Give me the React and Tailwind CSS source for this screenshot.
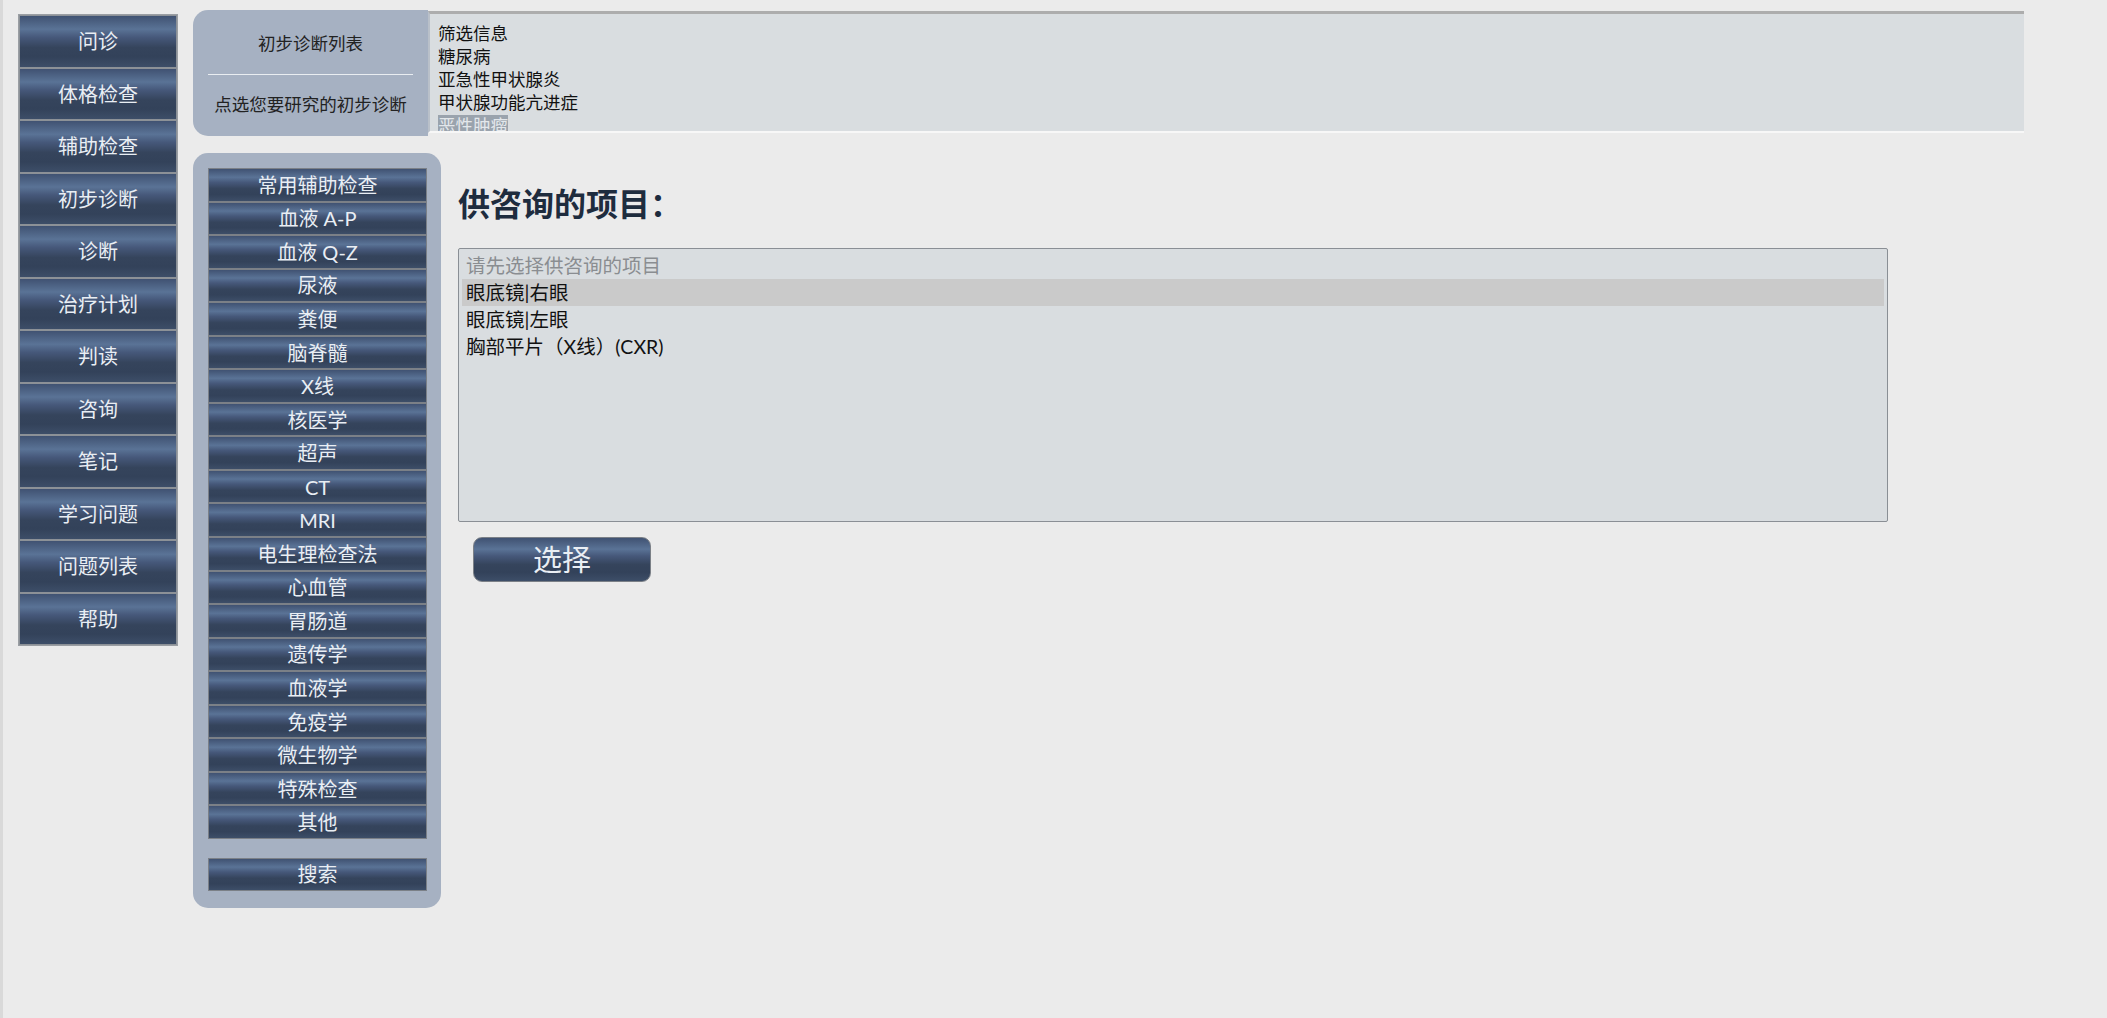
const font = { fontFamily: "Lato, 'Noto Sans CJK SC', sans-serif" };

const mainNav = ['问诊', '体格检查', '辅助检查', '初步诊断', '诊断', '治疗计划', '判读', '咨询', '笔记', '学习问题', '问题列表', '帮助'];

const subNav = [
  '常用辅助检查', '血液 A-P', '血液 Q-Z', '尿液', '粪便', '脑脊髓', 'X线', '核医学', '超声', 'CT',
  'MRI', '电生理检查法', '心血管', '胃肠道', '遗传学', '血液学', '免疫学', '微生物学', '特殊检查', '其他',
];

const diagnoses = ['筛选信息', '糖尿病', '亚急性甲状腺炎', '甲状腺功能亢进症'];

const items = ['眼底镜|右眼', '眼底镜|左眼', '胸部平片（X线）(CXR)'];

const btnBg =
  'bg-[linear-gradient(to_bottom,#405272_0%,#5a7396_26%,#46587a_42%,#35445c_62%,#33425a_80%,#3d4e68_100%)]';

export default function App() {
  return (
    <div
      className="flex min-h-[1018px] w-full bg-[#ebebeb] border-l-[3px] border-[#d9d9d9] text-[#1f1f1f]"
      style={font}
    >
      {/* main nav */}
      <div className="pl-[15px] pt-[14px]">
        <div className="flex w-[160px] flex-col border border-[#9a9ea3]">
          {mainNav.map((t) => (
            <button
              key={t}
              className={`flex h-[52.5px] items-center justify-center border border-[#8c9197] ${btnBg} text-[20px] text-[#e9eef4]`}
            >
              {t}
            </button>
          ))}
        </div>
      </div>

      <div className="ml-[15px] flex flex-col pt-[10px]">
        {/* top bar */}
        <div className="flex w-[1831px]">
          <div className="flex h-[126px] w-[235px] flex-col items-center rounded-l-[15px] bg-[#a6b1c2] px-[15px]">
            <div className="flex h-[64px] items-center pt-[4px] text-[17.5px] text-[#222]">初步诊断列表</div>
            <div className="h-px w-full bg-[#e9edf1]" />
            <div className="flex h-[60px] items-center whitespace-nowrap text-[17.5px] text-[#222]">
              点选您要研究的初步诊断
            </div>
          </div>
          <div className="mt-px h-[122px] flex-1 overflow-hidden border-t-[3px] border-b-2 border-l-2 border-t-[#adadad] border-b-[#f7f7f7] border-l-[#b9c0c9] bg-[#d9dde0] pl-[8px] pt-[8px]">
            {diagnoses.map((d) => (
              <div key={d} className="h-[23px] text-[17.5px] leading-[23px] text-[#111]">
                {d}
              </div>
            ))}
            <div className="h-[23px] text-[17.5px] leading-[23px]">
              <span className="bg-[#9aa3ad] text-[#e3e7eb]">恶性肿瘤</span>
            </div>
          </div>
        </div>

        <div className="mt-[17px] flex items-start">
          {/* sub nav */}
          <div className="flex w-[248px] flex-col rounded-[15px] bg-[#a6b1c2] pb-[17px] pl-[15px] pr-[14px] pt-[15px]">
            <div className="flex flex-col">
              {subNav.map((t) => (
                <button
                  key={t}
                  className={`flex h-[33.55px] items-center justify-center border border-[#7b8087] ${btnBg} text-[20px] leading-none text-[#e9eef4]`}
                >
                  {t}
                </button>
              ))}
            </div>
            <button
              className={`mt-[19px] flex h-[33px] items-center justify-center border border-[#7b8087] ${btnBg} text-[20px] leading-none text-[#e9eef4]`}
            >
              搜索
            </button>
          </div>

          {/* content */}
          <div className="ml-[17px] flex flex-col pt-[27px]">
            <h2 className="text-[32px] font-bold leading-[48px] text-[#1e2c3e]">供咨询的项目：</h2>
            <div className="mt-[20px] h-[274px] w-[1430px] rounded-[2px] border border-[#8a8f95] bg-[#d9dde0] p-[3px]">
              <div className="h-[27px] px-[4px] text-[19.5px] leading-[27px] text-[#8a8d91]">请先选择供咨询的项目</div>
              {items.map((t, i) => (
                <div
                  key={t}
                  className={`h-[27px] px-[4px] text-[19.5px] leading-[27px] text-[#111] ${i === 0 ? 'bg-[#cacaca]' : ''}`}
                >
                  {t}
                </div>
              ))}
            </div>
            <button
              className={`ml-[15px] mt-[15px] flex h-[45px] w-[178px] items-center justify-center rounded-[9px] border border-[#7b8087] ${btnBg} text-[29px] leading-none text-[#e9eef4]`}
            >
              选择
            </button>
          </div>
        </div>
      </div>
    </div>
  );
}
